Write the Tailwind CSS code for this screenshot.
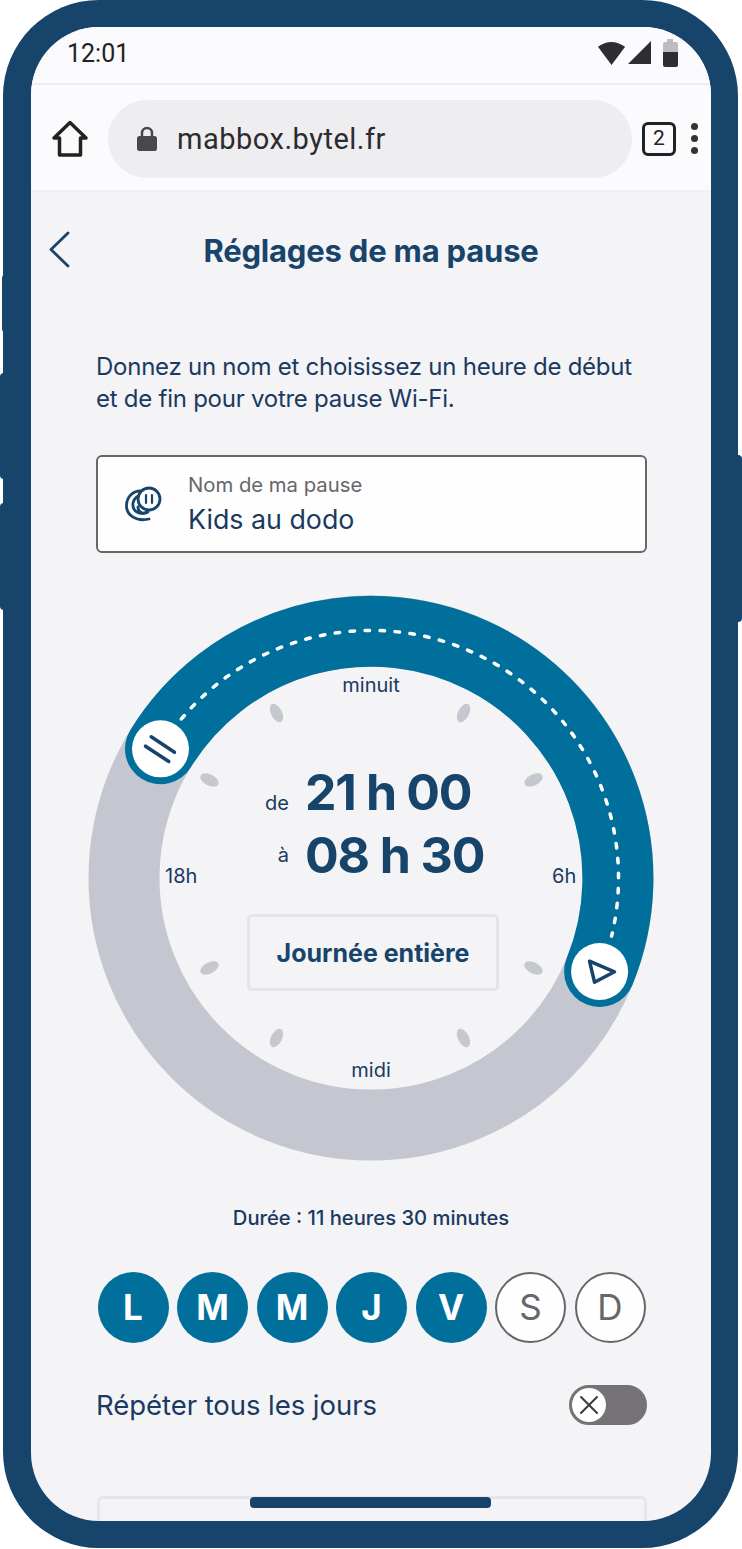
<!DOCTYPE html>
<html lang="fr">
<head>
<meta charset="utf-8">
<title>Réglages de ma pause</title>
<script src="https://cdn.jsdelivr.net/npm/@tailwindcss/browser@4"></script>
</head>
<body class="bg-white">
<div class="relative w-[742px] h-[1549px] bg-white overflow-hidden font-['Inter',sans-serif]">
  <!-- side buttons -->
  <div class="absolute left-[2px] top-[275px] w-[6px] h-[57px] rounded-l-[3px] bg-[#17446a]"></div>
  <div class="absolute left-0 top-[373px] w-[8px] h-[106px] rounded-l-[4px] bg-[#17446a]"></div>
  <div class="absolute left-0 top-[503px] w-[8px] h-[107px] rounded-l-[4px] bg-[#17446a]"></div>
  <div class="absolute right-0 top-[455px] w-[8px] h-[167px] rounded-r-[4px] bg-[#17446a]"></div>
  <!-- frame -->
  <div class="relative ml-[3px] w-[735px] h-[1548px] rounded-[96px] bg-[#17446a] pl-[28px] pr-[27px] pt-[27px] pb-[27px]">
    <div class="relative w-[680px] h-[1494px] rounded-[68px] overflow-hidden bg-[#f4f3f6] flex flex-col">
      <!-- status bar -->
      <div class="h-[58px] shrink-0 bg-[#fbfafd] border-b-2 border-[#eeedf1] flex items-center justify-between pl-[36px] pr-[33px] pb-[3px]">
        <span class="font-['Roboto',sans-serif] text-[25px] leading-none text-[#222]">12:01</span>
        <div class="flex items-center -translate-y-[1px]">
          <svg width="30" height="25" viewBox="0 0 32 26" preserveAspectRatio="none"><path d="M1 7 Q15 -3 30 7 L15.500 26 Z" fill="#2e2d30"/></svg>
          <svg width="24" height="25" viewBox="0 0 24 26" preserveAspectRatio="none"><path d="M24 1 V25 H1 Z" fill="#2e2d30"/></svg>
          <svg class="ml-[11px]" width="16" height="28" viewBox="0 0 16 28"><path d="M5 0 H11 V3 H14 Q16 3 16 5 V13 H1 V5 Q1 3 3 3 H5 Z" fill="#bdbcbf"/><path d="M1 13 H16 V26 Q16 28 14 28 H3 Q1 28 1 26 Z" fill="#2e2d30"/></svg>
        </div>
      </div>
      <!-- browser bar -->
      <div class="h-[107px] shrink-0 bg-[#fbfafd] border-b-2 border-[#f0eff3] flex items-center pl-[20px] pt-[2px]">
        <svg width="38" height="38" viewBox="0 0 38 38" fill="none" stroke="#222" stroke-width="3.500" stroke-linejoin="round"><path d="M19 2.500 L35 18 H29.500 V35 H8.500 V18 H3 Z"/></svg>
        <div class="ml-[19px] w-[524px] h-[78px] rounded-full bg-[#eeedf0] flex items-center pl-[29px]">
          <svg width="20" height="25" viewBox="0 0 20 25"><path d="M5 11 V7 a5 5 0 0 1 10 0 V11" fill="none" stroke="#49484b" stroke-width="2.500"/><rect x="0" y="10" width="20" height="15" rx="2.500" fill="#49484b"/></svg>
          <span class="ml-[20px] translate-y-[1px] font-['Roboto',sans-serif] text-[29px] tracking-[0.5px] leading-none text-[#2c2b2e]">mabbox.bytel.fr</span>
        </div>
        <div class="ml-[10px] w-[34px] h-[34px] rounded-[6px] border-[3px] border-[#222] flex items-center justify-center font-['Roboto',sans-serif] text-[21px] leading-none text-[#222]">2</div>
        <div class="ml-[15px] flex flex-col gap-[5px]">
          <span class="block w-[7px] h-[7px] rounded-full bg-[#333]"></span>
          <span class="block w-[7px] h-[7px] rounded-full bg-[#333]"></span>
          <span class="block w-[7px] h-[7px] rounded-full bg-[#333]"></span>
        </div>
      </div>
      <!-- page -->
      <div class="relative flex-1 px-[65px]">
        <div class="relative h-[121px] pt-[41px] text-center">
          <svg class="absolute -left-[48px] top-[39px]" width="22" height="37" viewBox="0 0 22 37" fill="none" stroke="#17446a" stroke-width="2.800" stroke-linecap="round" stroke-linejoin="round"><path d="M20 2 L3 18.500 L20 35"/></svg>
          <h1 class="text-[31px] leading-[36px] font-bold text-[#17446a] tracking-[-0.2px] whitespace-nowrap">Réglages de ma pause</h1>
        </div>
        <p class="mt-[38px] text-[24px] leading-[32px] text-[#1a3a5f] tracking-[-0.25px] whitespace-nowrap">Donnez un nom et choisissez un heure de début<br>et de fin pour votre pause Wi-Fi.</p>
        <!-- input -->
        <div class="mt-[40px] w-[551px] h-[98px] rounded-[6px] border-2 border-[#66666b] bg-[#fefefe] flex items-center pl-[26px]">
          <svg width="38" height="38" viewBox="0 0 38 38" fill="none" stroke="#17446a" stroke-width="2.800" stroke-linecap="round">
            <path d="M25 34 C12 37 2 30 2.500 20 C3 11 10 5 18 6"/>
            <path d="M23 27 C14 31 8 25 9 18 C10 13 14 10 19 10"/>
            <path d="M24 27 C20 30 14 28 14 22"/>
            <circle cx="25" cy="14" r="11" fill="#fefefe"/>
            <path d="M22 10 V18 M28 10 V18" stroke-width="2.200"/>
          </svg>
          <div class="ml-[26px] flex flex-col pb-[2px]">
            <span class="text-[20.300px] leading-[26px] text-[#66666b] whitespace-nowrap">Nom de ma pause</span>
            <span class="mt-[5px] text-[26.800px] leading-[32px] text-[#1a3a5f] whitespace-nowrap">Kids au dodo</span>
          </div>
        </div>
        <!-- dial -->
        <div class="relative -ml-[8px] mt-[42px] w-[566px] h-[566px]">
          <svg class="absolute inset-0" width="566" height="566" viewBox="0 0 566 566" fill="none">
            <circle cx="283" cy="283" r="247" stroke="#c4c7cf" stroke-width="71"/>
            <path d="M72.500 153.800 A247 247 0 0 1 511.600 376.500" stroke="#006f9b" stroke-width="71" stroke-linecap="round"/>
            <path d="M93.400 123.900 A247.500 247.500 0 0 1 523.600 341.100" stroke="#fff" stroke-width="3.500" stroke-linecap="round" stroke-dasharray="4.500 10.500"/>
            <circle cx="72.500" cy="153.800" r="28.500" fill="#fff"/>
            <circle cx="511.600" cy="376.500" r="28.500" fill="#fff"/>
            <path d="M63.200 141.800 L86.500 157.200 M57.500 151.200 L80.800 166.500" stroke="#17446a" stroke-width="3.500" stroke-linecap="round"/>
            <path d="M501.500 366.200 L526.500 376.800 L506.500 387.200 Z" stroke="#17446a" stroke-width="3.500" stroke-linejoin="round"/>
            <g fill="#c5c8ce">
              <ellipse cx="188.500" cy="118" rx="5.500" ry="10" transform="rotate(-27 188.500 118)"/>
              <ellipse cx="375.500" cy="118" rx="5.500" ry="10" transform="rotate(27 375.500 118)"/>
              <ellipse cx="121.500" cy="185" rx="10" ry="5.500" transform="rotate(27 121.500 185)"/>
              <ellipse cx="445.500" cy="185" rx="10" ry="5.500" transform="rotate(-27 445.500 185)"/>
              <ellipse cx="121.500" cy="373" rx="10" ry="5.500" transform="rotate(-27 121.500 373)"/>
              <ellipse cx="445.500" cy="373" rx="10" ry="5.500" transform="rotate(27 445.500 373)"/>
              <ellipse cx="188.500" cy="443" rx="5.500" ry="10" transform="rotate(27 188.500 443)"/>
              <ellipse cx="375.500" cy="443" rx="5.500" ry="10" transform="rotate(-27 375.500 443)"/>
            </g>
          </svg>
          <span class="absolute left-0 right-0 top-[77px] text-center text-[20px] leading-[26px] text-[#1a3a5f]">minuit</span>
          <span class="absolute left-0 right-0 top-[462px] text-center text-[20px] leading-[26px] text-[#1a3a5f]">midi</span>
          <span class="absolute left-[77px] top-[268px] text-[20px] leading-[26px] text-[#1a3a5f]">18h</span>
          <span class="absolute left-[464px] top-[268px] text-[20px] leading-[26px] text-[#1a3a5f]">6h</span>
          <!-- time -->
          <div class="absolute left-[177px] top-[167px] flex items-baseline w-[320px]">
            <span class="w-[24px] text-right text-[20px] leading-[60px] text-[#1a3a5f]">de</span>
            <span class="ml-[16px] text-[50px] leading-[60px] font-bold text-[#17446a] tracking-[-1.300px] whitespace-nowrap">21 h 00</span>
          </div>
          <div class="absolute left-[177px] top-[230px] flex items-baseline w-[320px]">
            <span class="w-[24px] -translate-y-[11px] text-right text-[20px] leading-[60px] text-[#1a3a5f]">à</span>
            <span class="ml-[16px] text-[50px] leading-[60px] font-bold text-[#17446a] tracking-[-1.100px] whitespace-nowrap">08 h 30</span>
          </div>
          <div class="absolute left-[159px] top-[319px] w-[252px] h-[77px] rounded-[5px] border-[3px] border-[#e4e4e9] pt-[3px] flex items-center justify-center text-[25px] font-bold text-[#17446a]">Journée entière</div>
        </div>
        <p class="mt-[44px] text-center text-[20.200px] leading-[26px] font-medium text-[#1a3a5f] whitespace-nowrap">Durée : 11 heures 30 minutes</p>
        <!-- days -->
        <div class="mt-[41px] ml-[1.500px] flex gap-[8.500px]">
          <div class="w-[71px] h-[71px] rounded-full bg-[#006f9b] flex items-center justify-center text-white text-[35px] font-bold leading-none">L</div>
          <div class="w-[71px] h-[71px] rounded-full bg-[#006f9b] flex items-center justify-center text-white text-[35px] font-bold leading-none">M</div>
          <div class="w-[71px] h-[71px] rounded-full bg-[#006f9b] flex items-center justify-center text-white text-[35px] font-bold leading-none">M</div>
          <div class="w-[71px] h-[71px] rounded-full bg-[#006f9b] flex items-center justify-center text-white text-[35px] font-bold leading-none">J</div>
          <div class="w-[71px] h-[71px] rounded-full bg-[#006f9b] flex items-center justify-center text-white text-[35px] font-bold leading-none">V</div>
          <div class="w-[71px] h-[71px] rounded-full bg-[#fefefe] border-2 border-[#66666b] flex items-center justify-center text-[#66666b] text-[35px] leading-none">S</div>
          <div class="w-[71px] h-[71px] rounded-full bg-[#fefefe] border-2 border-[#66666b] flex items-center justify-center text-[#66666b] text-[35px] leading-none">D</div>
        </div>
        <!-- repeat -->
        <div class="mt-[42px] h-[40px] w-[551px] flex items-center justify-between">
          <span class="translate-y-[1px] text-[27.500px] leading-none text-[#1a3a5f] tracking-[-0.05px] whitespace-nowrap">Répéter tous les jours</span>
          <div class="relative w-[78px] h-[40px] rounded-full bg-[#767376] border-[3px] border-[#767376]">
            <div class="absolute left-0 top-0 w-[34px] h-[34px] rounded-full bg-white flex items-center justify-center">
              <svg width="20" height="20" viewBox="0 0 20 20" stroke="#3a393c" stroke-width="2" stroke-linecap="round"><path d="M2 2 L18 18 M18 2 L2 18"/></svg>
            </div>
          </div>
        </div>
        <!-- next card -->
        <div class="absolute left-[66px] top-[1304px] w-[550px] h-[60px] rounded-[6px] border-[3px] border-[#e6e5ea]"></div>
      </div>
      <!-- home pill -->
      <div class="absolute left-[219px] top-[1470px] w-[241px] h-[11px] rounded-[4px] bg-[#17446a]"></div>
    </div>
  </div>
</div>
</body>
</html>
